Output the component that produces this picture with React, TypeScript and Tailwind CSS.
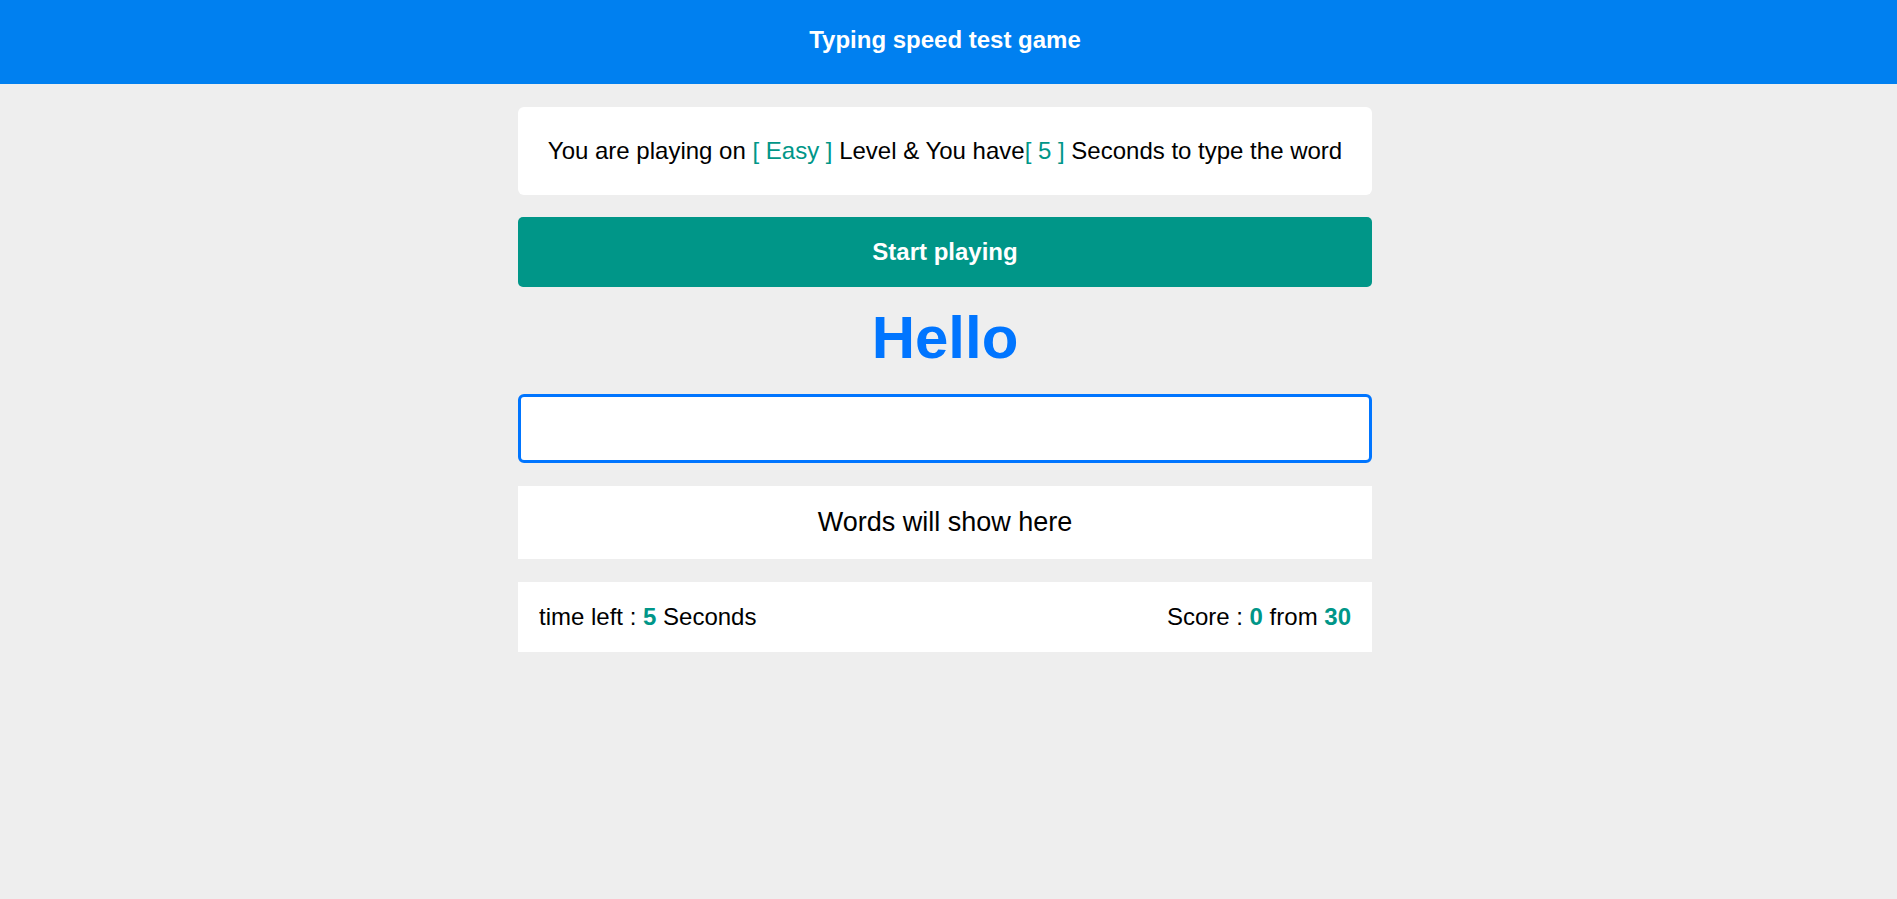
export default function App() {
  return (
    <div className="min-h-screen bg-[#eeeeee] font-['Liberation_Sans',Arial,sans-serif] text-black">
      <header className="h-[84px] bg-[#0080f0] flex items-center justify-center pr-[7px] pb-[4px]">
        <h1 className="text-[24px] font-bold text-white">Typing speed test game</h1>
      </header>

      <main className="pr-[7px]">
        <div className="w-[854px] mx-auto pt-[23px] flex flex-col">
          <div className="h-[88px] bg-white rounded-md flex items-center justify-center text-[24px]">
            <p>
              You are playing on <span className="text-[#009688]">[ Easy ]</span> Level &amp; You have
              <span className="text-[#009688]">[ 5 ]</span> Seconds to type the word
            </p>
          </div>

          <button className="mt-[22px] h-[70px] bg-[#009688] rounded-[5px] text-white text-[24px] font-bold">
            Start playing
          </button>

          <div className="mt-[16px] h-[69px] flex items-center justify-center text-[60px] font-bold text-[#0075ff] leading-none">
            Hello
          </div>

          <input
            type="text"
            className="mt-[22px] h-[69px] bg-white border-[3px] border-[#0075ff] rounded-md outline-none px-3 text-[24px]"
          />

          <div className="mt-[23px] h-[73px] bg-white flex items-center justify-center text-[27px]">
            Words will show here
          </div>

          <div className="mt-[23px] h-[70px] bg-white flex items-center justify-between px-[21px] text-[24px]">
            <span>
              time left : <span className="font-bold text-[#009688]">5</span> Seconds
            </span>
            <span>
              Score : <span className="font-bold text-[#009688]">0</span> from{" "}
              <span className="font-bold text-[#009688]">30</span>
            </span>
          </div>
        </div>
      </main>
    </div>
  );
}
